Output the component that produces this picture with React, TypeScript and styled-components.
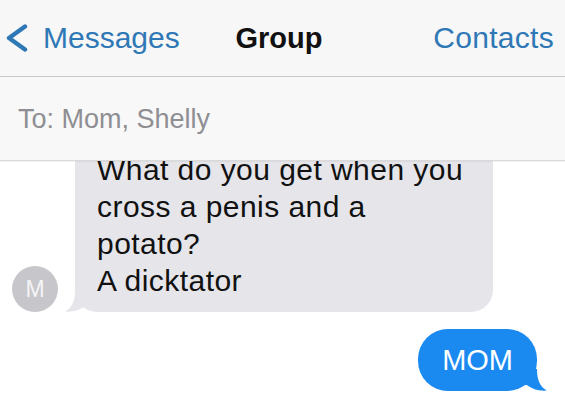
import React from "react";
import styled, { createGlobalStyle } from "styled-components";

const Global = createGlobalStyle`
  html, body { margin: 0; padding: 0; background: #ffffff; }
  body { font-family: "Liberation Sans", Arial, sans-serif; }
  * { box-sizing: border-box; }
`;

const Screen = styled.div`
  width: 565px;
  height: 411px;
  display: flex;
  flex-direction: column;
  overflow: hidden;
  background: #ffffff;
`;

const NavBar = styled.header`
  height: 77px;
  flex: none;
  display: grid;
  grid-template-columns: 1fr auto 1fr;
  align-items: center;
  background: #f7f7f7;
  border-bottom: 1px solid #c9c9cc;
  font-size: 30px;
`;

const BackButton = styled.div`
  justify-self: start;
  display: flex;
  align-items: center;
  gap: 14px;
  padding-left: 5px;
  color: #2f78b6;
`;

const Title = styled.div`
  font-weight: 700;
  font-size: 29px;
  color: #111111;
  padding-right: 7px;
`;

const NavAction = styled.div`
  justify-self: end;
  padding-right: 11px;
  color: #2f78b6;
  letter-spacing: 0.3px;
`;

const ToBar = styled.div`
  height: 84px;
  flex: none;
  display: flex;
  align-items: center;
  padding: 2px 0 0 18px;
  background: #f8f8f8;
  border-bottom: 1px solid #dadada;
  box-shadow: 0 1px 1px rgba(0, 0, 0, 0.04);
  font-size: 27px;
  color: #8e8e93;
  position: relative;
  z-index: 1;
`;

const Transcript = styled.div`
  flex: 1;
  display: flex;
  flex-direction: column;
  gap: 17px;
  overflow: hidden;
`;

const Row = styled.div<{ $outgoing?: boolean }>`
  display: flex;
  align-items: flex-end;
  justify-content: ${(p) => (p.$outgoing ? "flex-end" : "flex-start")};
  gap: 17px;
  padding: ${(p) => (p.$outgoing ? "0 28px 0 0" : "0 0 0 12px")};
  &:first-child {
    margin-top: -20px;
  }
`;

const Avatar = styled.div`
  width: 46px;
  height: 46px;
  flex: none;
  border-radius: 50%;
  background: #c6c6cb;
  color: #f4f4f6;
  font-size: 23px;
  display: flex;
  align-items: center;
  justify-content: center;
`;

const Bubble = styled.div<{ $outgoing?: boolean }>`
  position: relative;
  white-space: nowrap;
  background: ${(p) => (p.$outgoing ? "#1b8af0" : "#e5e5ea")};
  color: ${(p) => (p.$outgoing ? "#ffffff" : "#111111")};
  border-radius: ${(p) => (p.$outgoing ? "30px" : "22px")};
  font-size: ${(p) => (p.$outgoing ? "29px" : "30px")};
  line-height: ${(p) => (p.$outgoing ? "34px" : "37px")};
  letter-spacing: ${(p) => (p.$outgoing ? "0" : "0.45px")};
  padding: ${(p) => (p.$outgoing ? "14px 24px" : "10px 30px 13px 22px")};
`;

const Tail = styled.svg<{ $outgoing?: boolean }>`
  position: absolute;
  bottom: 0;
  width: 26px;
  height: 22px;
  ${(p) =>
    p.$outgoing
      ? "right: -10px; transform: scaleX(-1);"
      : "left: -10px;"}
`;

const BubbleTail = ({ outgoing, color }: { outgoing?: boolean; color: string }) => (
  <Tail $outgoing={outgoing} viewBox="0 0 26 22" aria-hidden>
    <path
      d="M10 0 C10 11 7 18 0 21.5 C8 22.3 15 20 20 16 L26 16 L26 0 Z"
      fill={color}
    />
  </Tail>
);

const Chevron = () => (
  <svg width="24" height="28" viewBox="0 0 24 28" aria-hidden>
    <path
      d="M20 2.5 L4 14 L20 25.5"
      fill="none"
      stroke="#2f78b6"
      strokeWidth="4.4"
      strokeLinecap="round"
      strokeLinejoin="round"
    />
  </svg>
);

export default function App() {
  return (
    <>
      <Global />
      <Screen>
        <NavBar>
          <BackButton>
            <Chevron />
            <span>Messages</span>
          </BackButton>
          <Title>Group</Title>
          <NavAction>Contacts</NavAction>
        </NavBar>
        <ToBar>To: Mom, Shelly</ToBar>
        <Transcript>
          <Row>
            <Avatar>M</Avatar>
            <Bubble>
              What do you get when you
              <br />
              cross a penis and a
              <br />
              potato?
              <br />
              A dicktator
              <BubbleTail color="#e5e5ea" />
            </Bubble>
          </Row>
          <Row $outgoing>
            <Bubble $outgoing>
              MOM
              <BubbleTail outgoing color="#1b8af0" />
            </Bubble>
          </Row>
        </Transcript>
      </Screen>
    </>
  );
}
